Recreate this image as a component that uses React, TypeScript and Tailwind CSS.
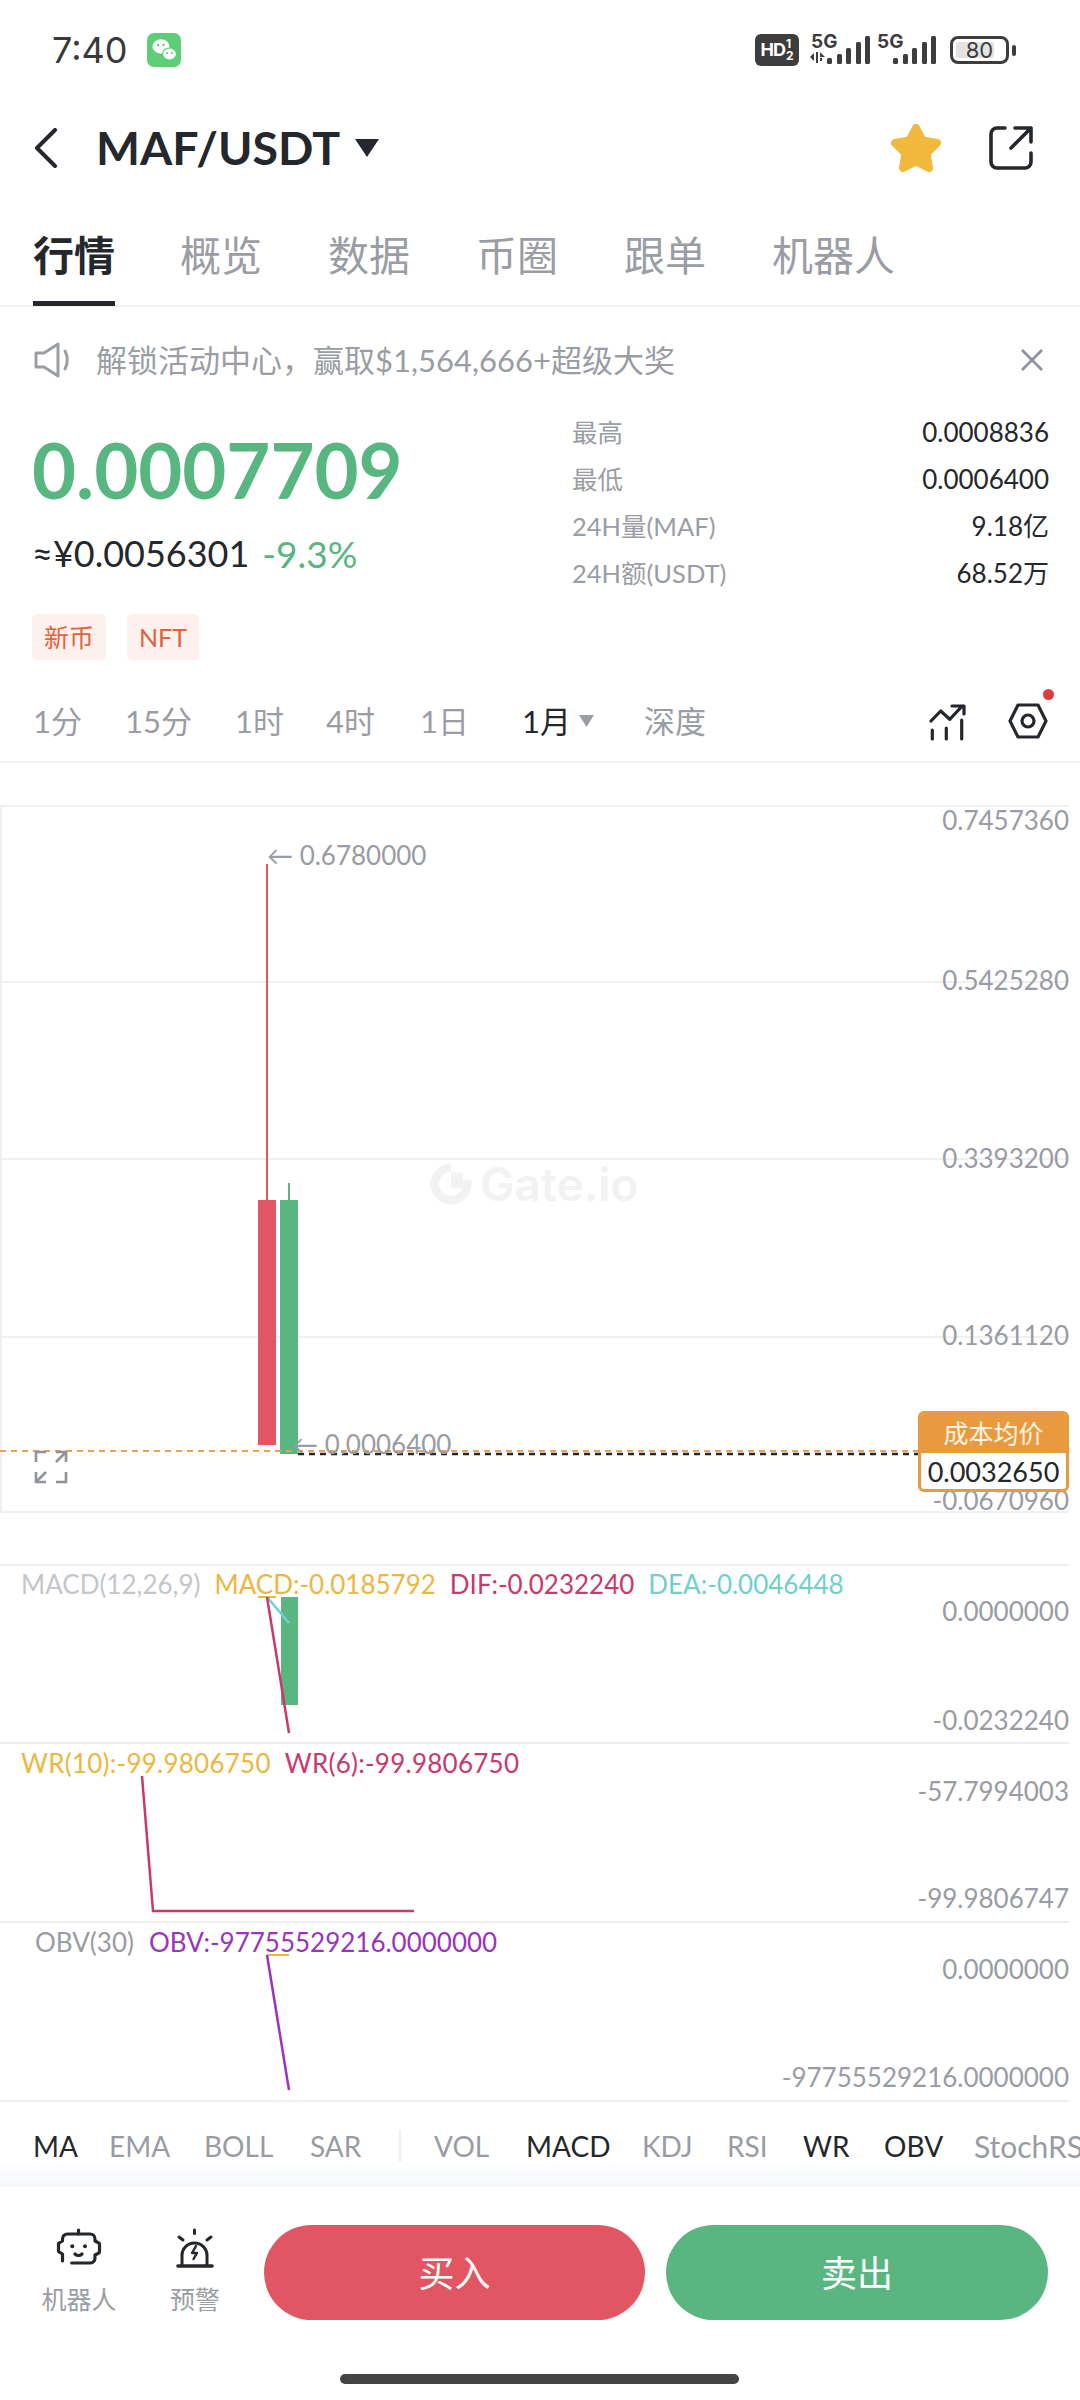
import React from "react";

const FONT = "[font-family:Lato,'Noto_Sans_CJK_SC',sans-serif]";
const STATUS_FONT = "[font-family:Inter,sans-serif]";

function Star() {
  return (
    <svg width="52" height="50" viewBox="0 0 52 50" className="ml-auto">
      <path d="M26 5 L32.5 17.5 L47 20 L36.5 30.5 L39 45 L26 38.5 L13 45 L15.5 30.5 L5 20 L19.5 17.5 Z" fill="#f2b83e" stroke="#f2b83e" strokeWidth="8" strokeLinejoin="round" />
    </svg>
  );
}

function Share() {
  return (
    <svg width="46" height="46" viewBox="0 0 46 46" fill="none" stroke="#24272c" strokeWidth="3.6" strokeLinecap="round" strokeLinejoin="round" className="ml-[46px]">
      <path d="M17 3H9a6 6 0 0 0-6 6v28a6 6 0 0 0 6 6h28a6 6 0 0 0 6-6v-9" />
      <path d="M23 23 43 3M27 3h16v14" />
    </svg>
  );
}

function WeChat() {
  return (
    <svg width="34" height="34" viewBox="0 0 34 34" className="ml-[19px]">
      <rect width="34" height="34" rx="7" fill="#5fcf77" />
      <ellipse cx="14" cy="13.5" rx="8.500" ry="7.200" fill="#fff" />
      <ellipse cx="22.5" cy="21" rx="7" ry="6" fill="#fff" stroke="#5fcf77" strokeWidth="1.200" />
      <circle cx="11" cy="12" r="1.200" fill="#5fcf77" />
      <circle cx="16.5" cy="12" r="1.200" fill="#5fcf77" />
      <circle cx="20" cy="20" r="1" fill="#5fcf77" />
      <circle cx="25" cy="20" r="1" fill="#5fcf77" />
    </svg>
  );
}

function Signal({ tiny }: { tiny?: boolean }) {
  return (
    <div className="relative w-[60px] h-[32px]">
      <span className={`absolute left-[1px] top-[-2px] text-[19px] leading-[19px] font-bold text-[#3d3d3d] ${STATUS_FONT}`}>5G</span>
      <svg width="60" height="32" viewBox="0 0 60 32" className="absolute left-0 top-0" fill="#3d3d3d">
        {tiny && <path d="M0 23 4 19v8zM6 18h2v11H6zM10 18l5 5h-5zM10 24h2v3h-2z" />}
        <rect x="17" y="24" width="5" height="6" rx="1.500" />
        <rect x="27" y="20" width="5" height="10" rx="1.500" />
        <rect x="36" y="14" width="5" height="16" rx="1.500" />
        <rect x="46" y="8" width="5" height="22" rx="1.500" />
        <rect x="55" y="2" width="5" height="28" rx="1.500" />
      </svg>
    </div>
  );
}

function Expand() {
  return (
    <svg width="34" height="34" viewBox="0 0 34 34" fill="none" stroke="#8f939a" strokeWidth="2.600" className="absolute left-[32px] top-[643px]">
      <path d="M2 12V2h10M22 2h10v10M32 22v10H22M12 32H2V22" />
      <path d="M32 2 22 12M2 32l10-10" />
    </svg>
  );
}

function Candles() {
  return (
    <svg width="1069" height="707" viewBox="0 805 1069 707" className="absolute left-[-2px] top-[-2px]">
      <rect x="266" y="864" width="2" height="336" fill="#e25563" />
      <rect x="288" y="1183" width="2" height="17" fill="#5ab681" />
      <rect x="258" y="1200" width="18" height="245" fill="#e25563" />
      <rect x="280" y="1200" width="18" height="254" fill="#5ab681" />
      <line x1="0" y1="1451" x2="918" y2="1451" stroke="#e9a24d" strokeWidth="2" strokeDasharray="6 5" />
      <line x1="298" y1="1454" x2="918" y2="1454" stroke="#24272c" strokeWidth="2.500" strokeDasharray="6 5" />
    </svg>
  );
}

function GateMark() {
  return (
    <svg width="42" height="42" viewBox="0 0 44 44" fill="none" stroke="#f2f2f3" strokeWidth="9">
      <path d="M22 5a17 17 0 1 0 17 17H22" />
      <rect x="22" y="10" width="12" height="12" fill="#f2f2f3" stroke="none" />
    </svg>
  );
}

function Axis({ label, top }: { label: string; top: string }) {
  return <span className={`absolute right-0 text-[26px] leading-[30px] text-[#999ca3] ${top}`}>{label}</span>;
}

function Pane({ children }: { children: React.ReactNode }) {
  return <div className="relative w-[1069px] border-b-2 border-[#eeeeef]">{children}</div>;
}

function Robot() {
  return (
    <svg width="46" height="42" viewBox="0 0 46 42" fill="none" stroke="#24272c" strokeWidth="3.200" strokeLinecap="round" strokeLinejoin="round" className="mt-[3px]">
      <path d="M22.500 2v4" />
      <path d="M15.700 35H34a5 5 0 0 0 5-5v-3l3-1.500a2 2 0 0 0 1.500-2v-7a2 2 0 0 0-1.500-2L39 13v-2a5 5 0 0 0-5-5H11.500a5 5 0 0 0-5 5v2L4 14.500a2 2 0 0 0-1.500 2v6a2 2 0 0 0 1.500 2L6.500 26v7" />
      <circle cx="16.300" cy="18.300" r="2" fill="#24272c" stroke="none" />
      <circle cx="29" cy="18.300" r="2" fill="#24272c" stroke="none" />
      <path d="M19 26c2 2 5 2 7 0" />
    </svg>
  );
}

function Alert() {
  return (
    <svg width="44" height="42" viewBox="0 0 44 42" fill="none" stroke="#24272c" strokeWidth="3" strokeLinecap="round" strokeLinejoin="round" className="mt-[2px]">
      <path d="M21.500 3v3.500M6 10l4 3M38 10l-4 3" />
      <path d="M9 37V28.500a12.500 12.500 0 0 1 25 0V37" />
      <path d="M5 39h34" strokeWidth="3.600" />
      <path d="M23 19 19 26h5l-3.500 6" strokeWidth="2.400" />
    </svg>
  );
}

export default function App() {
  const tabs = ["概览", "数据", "币圈", "跟单", "机器人"];
  const stats = [
    ["最高", "0.0008836"],
    ["最低", "0.0006400"],
    ["24H量(MAF)", "9.18亿"],
    ["24H额(USDT)", "68.52万"],
  ];
  const intervals = [
    ["1分", "w-[92px]"],
    ["15分", "w-[110px]"],
    ["1时", "w-[91px]"],
    ["4时", "w-[94px]"],
    ["1日", "w-[102px]"],
  ];
  const inds: [string, boolean, string][] = [
    ["MA", true, "w-[76px]"],
    ["EMA", false, "w-[95px]"],
    ["BOLL", false, "w-[106px]"],
    ["SAR", false, "w-[89px]"],
  ];
  const inds2: [string, boolean, string][] = [
    ["VOL", false, "w-[92px]"],
    ["MACD", true, "w-[116px]"],
    ["KDJ", false, "w-[85px]"],
    ["RSI", false, "w-[76px]"],
    ["WR", true, "w-[81px]"],
    ["OBV", true, "w-[90px]"],
  ];
  return (
    <div className={`relative w-[1080px] h-[2400px] overflow-hidden bg-white flex flex-col text-[#24272c] ${FONT}`}>
      {/* status bar */}
      <div className="h-[100px] shrink-0 flex items-center pl-[52px] pr-[64px]">
        <span className={`text-[36px] leading-none text-[#3a3a3a] ${STATUS_FONT}`}>7:40</span>
        <WeChat />
        <div className={`ml-auto flex items-center ${STATUS_FONT}`}>
          <div className="w-[44px] h-[32px] rounded-[6px] bg-[#3d3d3d] text-white flex items-center justify-center gap-[1px]">
            <span className="text-[18px] font-bold leading-none tracking-[-1px]">HD</span>
            <span className="flex flex-col text-[12px] font-bold leading-[12px]"><span>1</span><span>2</span></span>
          </div>
          <div className="ml-[11px]"><Signal tiny /></div>
          <div className="ml-[6px]"><Signal /></div>
          <div className="ml-[14px] flex items-center">
            <div className="relative w-[59px] h-[28px] rounded-[8px] border-[3px] border-[#3d3d3d] flex items-center justify-center text-[22px] leading-none text-[#3d3d3d]">
              <span className="absolute left-[3px] top-[3px] bottom-[3px] w-[38px] bg-[#e3e3e3] rounded-[2px]" />
              <span className="relative">80</span>
            </div>
            <span className="ml-[3px] w-[4px] h-[11px] rounded-[2px] bg-[#3d3d3d]" />
          </div>
        </div>
      </div>
      {/* nav */}
      <div className="h-[95px] shrink-0 flex items-center pl-[34px] pr-[46px]">
        <svg width="24" height="40" viewBox="0 0 24 40" fill="none" stroke="#24272c" strokeWidth="4" strokeLinecap="round" strokeLinejoin="round">
          <path d="M21 2 3 20l18 18" />
        </svg>
        <span className="ml-[38px] text-[46.500px] leading-none font-bold">MAF/USDT</span>
        <svg width="24" height="18" viewBox="0 0 24 18" className="ml-[15px]"><path d="M0 0h24L12 18z" fill="#24272c" /></svg>
        <Star />
        <Share />
      </div>
      {/* tabs */}
      <div className="h-[112px] shrink-0 flex items-stretch pl-[33px] border-b-2 border-[#f0f0f1]">
        <div className="relative w-[82px] flex items-center justify-center text-[41px] font-semibold pt-[12px]">
          行情
          <span className="absolute left-0 right-0 bottom-[-1px] h-[5px] bg-[#24272c]" />
        </div>
        <div className="flex items-center pt-[12px] pl-[65px] gap-[66px] text-[41px] text-[#9a9da3]">
          {tabs.map((t) => <span key={t}>{t}</span>)}
        </div>
      </div>
      {/* notice */}
      <div className="h-[106px] shrink-0 flex items-center pl-[34px] pr-[36px] text-[#9a9da3]">
        <svg width="38" height="36" viewBox="0 0 38 36" fill="none" stroke="#9a9da3" strokeWidth="3" strokeLinejoin="round" strokeLinecap="round">
          <path d="M2 11h8L24 2v32L10 25H2z" />
          <path d="M31 9c3 5 3 13 0 18" />
        </svg>
        <span className="ml-[24px] text-[31px] leading-none">解锁活动中心，赢取$1,564,666+超级大奖</span>
        <svg width="24" height="22" viewBox="0 0 24 22" fill="none" stroke="#8f939a" strokeWidth="2.800" className="ml-auto"><path d="M2 1l20 20M22 1 2 21" /></svg>
      </div>
      {/* info */}
      <div className="h-[262px] shrink-0 flex pl-[32px] pr-[31px]">
        <div className="w-[540px] flex flex-col items-start">
          <div className="mt-[19px] h-[76px] text-[76px] leading-[76px] font-bold text-[#58b681]">0.0007709</div>
          <div className="mt-[23px] h-[44px] flex items-center text-[36px] leading-none">
            <span>≈¥0.0056301</span>
            <span className="ml-[13px] text-[37px] text-[#58b681]">-9.3%</span>
          </div>
          <div className="mt-[39px] flex gap-[21px] text-[25px] leading-none text-[#e2623f]">
            <span className="h-[46px] w-[74px] rounded-[5px] bg-[#fdf1ed] flex items-center justify-center">新币</span>
            <span className="h-[46px] w-[72px] rounded-[5px] bg-[#fdf1ed] flex items-center justify-center">NFT</span>
          </div>
        </div>
        <div className="flex-1 flex flex-col -mt-[4px]">
          {stats.map(([k, v]) => (
            <div key={k} className="h-[47px] flex items-center justify-between">
              <span className="text-[25.500px] text-[#9a9da3]">{k}</span>
              <span className="text-[26px]">{v}</span>
            </div>
          ))}
        </div>
      </div>
      {/* interval row */}
      <div className="h-[88px] shrink-0 flex items-center pl-[33px] pr-[32px] border-b-2 border-[#f0f0f1] text-[31px] text-[#9a9da3] pt-[6px]">
        {intervals.map(([t, w]) => <span key={t} className={w}>{t}</span>)}
        <span className="text-[#24272c]">1月</span>
        <svg width="15" height="12" viewBox="0 0 15 12" className="ml-[8px]"><path d="M0 0h15L7.500 12z" fill="#9a9da3" /></svg>
        <span className="ml-[50px]">深度</span>
        <svg width="38" height="40" viewBox="0 0 38 40" fill="none" stroke="#24272c" strokeWidth="3.200" strokeLinecap="round" strokeLinejoin="round" className="ml-auto">
          <path d="M2 20 11.700 10 20.700 18.300 33.300 5M23 5h12v8" />
          <path d="M3.300 29v9M17.300 27v11M32.700 19v19" />
        </svg>
        <div className="relative ml-[41px]">
          <svg width="40" height="36" viewBox="0 0 40 36" fill="none" stroke="#24272c" strokeWidth="3.200" strokeLinejoin="round">
            <path d="M10 2h20l8 16-8 16H10L2 18z" />
            <circle cx="20" cy="18" r="6" />
          </svg>
          <span className="absolute right-[-6px] top-[-14px] w-[11px] h-[11px] rounded-full bg-[#de3c40]" />
        </div>
      </div>
      {/* main chart */}
      <div className="mt-[42px] shrink-0 relative w-[1069px] h-[708px] border-t-2 border-b-2 border-l-2 border-[#f0f0f1]">
        <div className="absolute left-0 right-0 top-[174px] h-[2px] bg-[#f0f0f1]" />
        <div className="absolute left-0 right-0 top-[351px] h-[2px] bg-[#f0f0f1]" />
        <div className="absolute left-0 right-0 top-[529px] h-[2px] bg-[#f0f0f1]" />
        <Candles />
        <div className="absolute left-[428px] top-[354px] flex items-center gap-[8px] text-[46px] font-semibold leading-none text-[#f2f2f3] [font-family:Inter,sans-serif]">
          <GateMark />
          <span>Gate.io</span>
        </div>
        <span className="absolute left-[265px] top-[33px] text-[26px] leading-[30px] text-[#999ca3]">← 0.6780000</span>
        <span className="absolute left-[290px] top-[622px] text-[26px] leading-[30px] text-[#999ca3]">← 0.0006400</span>
        <Axis label="0.7457360" top="top-[-2px]" />
        <Axis label="0.5425280" top="top-[158px]" />
        <Axis label="0.3393200" top="top-[336px]" />
        <Axis label="0.1361120" top="top-[513px]" />
        <Axis label="-0.0670960" top="top-[678px]" />
        <Expand />
        <div className="absolute right-0 top-[604px] w-[151px] h-[81px] rounded-[6px] border-[3px] border-[#ea9a3e] bg-white overflow-hidden flex flex-col items-center">
          <div className="w-full h-[39px] bg-[#ea9a3e] flex items-center justify-center text-[25px] leading-none text-[#fff6e6]">成本均价</div>
          <div className="flex-1 flex items-center text-[27px] leading-none text-[#24272c]">0.0032650</div>
        </div>
      </div>
      {/* sub panes */}
      <div className="mt-[51px] shrink-0 w-[1069px] h-[2px] bg-[#eeeeef]" />
      <Pane>
        <div className="h-[176px] pl-[21px] pt-[3px] text-[26px] leading-[30px] flex gap-[14px]">
          <span className="text-[#c4c6ca]">MACD(12,26,9)</span>
          <span className="text-[#ecb73f]">MACD:-0.0185792</span>
          <span className="text-[#c9386e]">DIF:-0.0232240</span>
          <span className="text-[#6fd0cc]">DEA:-0.0046448</span>
        </div>
        <svg width="1069" height="176" viewBox="0 1567 1069 176" fill="none" className="absolute left-0 top-0">
          <rect x="281" y="1598" width="17" height="108" fill="#5ab681" />
          <path d="M258 1598h18" stroke="#ecb73f" strokeWidth="2" />
          <path d="M267 1598 289 1624" stroke="#6fd0cc" strokeWidth="2.500" />
          <path d="M267 1598 289 1734" stroke="#c9386e" strokeWidth="2.500" />
        </svg>
        <Axis label="0.0000000" top="top-[30px]" />
        <Axis label="-0.0232240" top="top-[139px]" />
      </Pane>
      <Pane>
        <div className="h-[177px] pl-[21px] pt-[4px] text-[26px] leading-[30px] tracking-[0.25px] flex gap-[14px]">
          <span className="text-[#ecb73f]">WR(10):-99.9806750</span>
          <span className="text-[#c9386e]">WR(6):-99.9806750</span>
        </div>
        <svg width="1069" height="177" viewBox="0 1745 1069 177" fill="none" className="absolute left-0 top-0">
          <path d="M142 1777 153 1912H414" stroke="#c9386e" strokeWidth="2.500" />
        </svg>
        <Axis label="-57.7994003" top="top-[32px]" />
        <Axis label="-99.9806747" top="top-[139px]" />
      </Pane>
      <Pane>
        <div className="h-[177px] pl-[35px] pt-[4px] text-[26px] leading-[30px] flex gap-[15px]">
          <span className="text-[#999ca3]">OBV(30)</span>
          <span className="text-[#9b33c0]">OBV:-97755529216.0000000</span>
        </div>
        <svg width="1069" height="177" viewBox="0 1924 1069 177" fill="none" className="absolute left-0 top-0">
          <path d="M267 1956H289" stroke="#ecb73f" strokeWidth="2" />
          <path d="M267 1956 289 2091" stroke="#9b33c0" strokeWidth="2.500" />
        </svg>
        <Axis label="0.0000000" top="top-[31px]" />
        <Axis label="-97755529216.0000000" top="top-[139px]" />
      </Pane>
      {/* indicator row */}
      <div className="h-[85px] shrink-0 pl-[33px] pt-[3px] flex items-center whitespace-nowrap overflow-hidden text-[28px] leading-none text-[#999ca3] bg-gradient-to-b from-white from-[70%] to-[#f5f7fa]">
        {inds.map(([t, d, w]) => <span key={t} className={`${w} shrink-0 ${d ? "text-[#24272c]" : ""}`}>{t}</span>)}
        <span className="shrink-0 w-[2px] h-[32px] bg-[#eeeeef] mr-[33px]" />
        {inds2.map(([t, d, w]) => <span key={t} className={`${w} shrink-0 ${d ? "text-[#24272c]" : ""}`}>{t}</span>)}
        <span className="shrink-0 text-[30px]">StochRSI</span>
      </div>
      {/* bottom */}
      <div className="flex-1 relative">
        <div className="flex items-start pt-[38px] pl-[41px] pr-[32px]">
          <div className="w-[76px] flex flex-col items-center text-[25px] leading-none text-[#9a9da3]">
            <Robot />
            <span className="mt-[17px]">机器人</span>
          </div>
          <div className="ml-[53px] w-[50px] flex flex-col items-center text-[25px] leading-none text-[#9a9da3]">
            <Alert />
            <span className="mt-[18px]">预警</span>
          </div>
          <div className="ml-[44px] w-[381px] h-[95px] rounded-full bg-[#e25563] flex items-center justify-center text-[36px] text-white">买入</div>
          <div className="ml-[21px] w-[382px] h-[95px] rounded-full bg-[#5ab681] flex items-center justify-center text-[36px] text-white">卖出</div>
        </div>
        <div className="absolute left-[340px] bottom-[16px] w-[399px] h-[10px] rounded-full bg-[#444444]" />
      </div>
    </div>
  );
}
